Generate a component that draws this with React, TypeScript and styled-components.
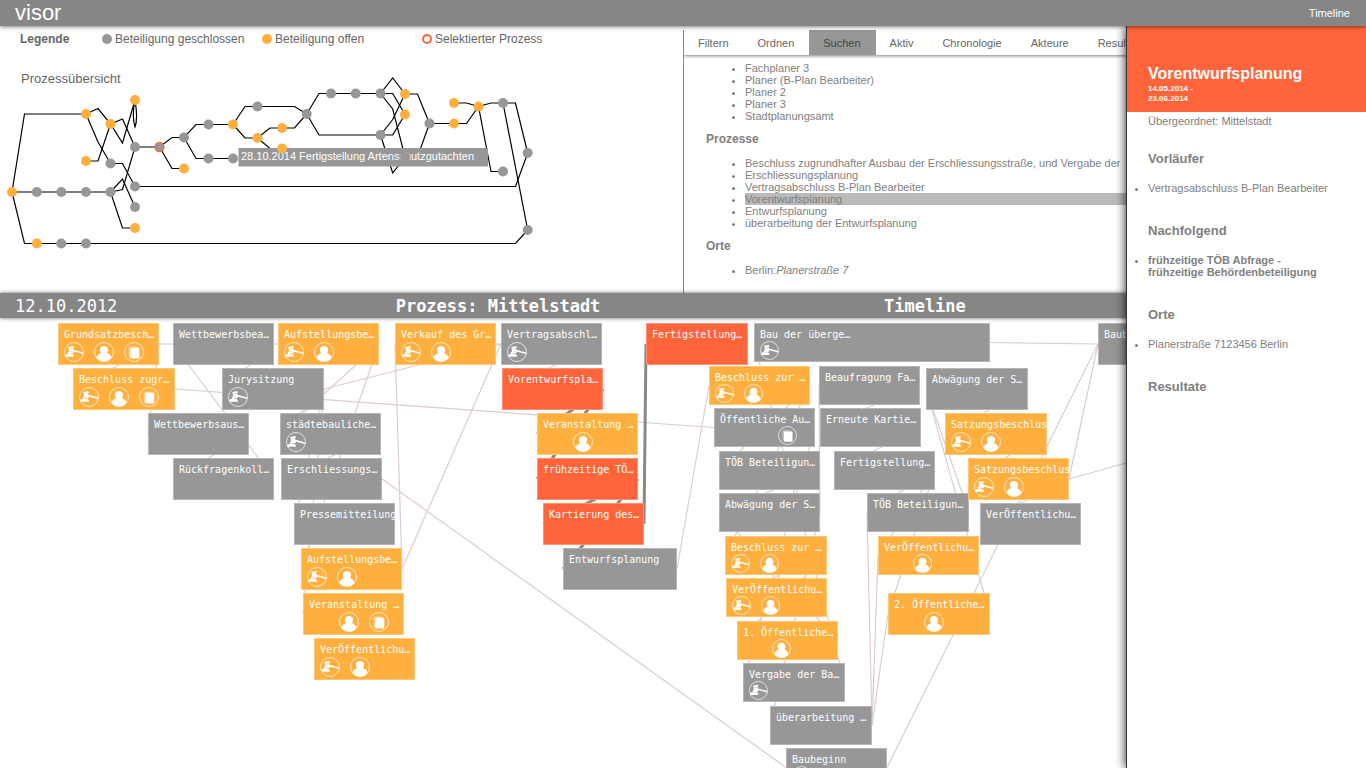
import React from "react";
import styled, { createGlobalStyle, css } from "styled-components";

const color = {
  bar: "#868686",
  closed: "#979797",
  open: "#ffaf3e",
  selected: "#ff643a",
  text: "#666666",
  soft: "#808080",
};

const sans = '"Liberation Sans", Arial, sans-serif';
const mono = '"DejaVu Sans Mono", monospace';

const GlobalStyle = createGlobalStyle`
  * { box-sizing: border-box; }
  body { margin: 0; background: #fff; font: 11px/12px ${sans}; color: ${color.soft}; }
  h1, h2, h3, p, ul { margin: 0; padding: 0; }
  button { font: inherit; color: inherit; border: 0; padding: 0; margin: 0; background: none; cursor: pointer; }
  a { color: inherit; text-decoration: none; }
`;

const Page = styled.div`
  display: flex;
  flex-direction: column;
  height: 100vh;
  overflow: hidden;
`;

const TopBar = styled.header`
  position: relative;
  z-index: 3;
  flex: none;
  display: flex;
  align-items: center;
  justify-content: space-between;
  height: 26px;
  padding: 0 16px 0 15px;
  background: ${color.bar};
  color: #fff;
  box-shadow: 0 1px 4px rgba(0, 0, 0, 0.5);
`;

const Brand = styled.h1`
  font-size: 22px;
  line-height: 26px;
  font-weight: 400;
`;

const Body = styled.main`
  position: relative;
  flex: 1;
  min-height: 0;
  display: flex;
  flex-direction: column;
`;

const Upper = styled.div`
  flex: none;
  display: grid;
  grid-template-columns: 1fr 1fr;
  height: 267px;
`;

const Overview = styled.section`
  display: flex;
  flex-direction: column;
  min-width: 0;
`;

const Legend = styled.div`
  display: flex;
  align-items: center;
  height: 25px;
  padding-left: 20px;
  font-size: 12px;
  line-height: 14px;
  color: ${color.text};
`;

const LegendTitle = styled.strong`
  width: 82px;
`;

const LegendItem = styled.span<{ $width: number }>`
  display: flex;
  align-items: center;
  gap: 3px;
  width: ${(p) => p.$width}px;
  white-space: nowrap;
`;

const Dot = styled.i<{ $kind: "closed" | "open" | "ring" }>`
  flex: none;
  width: 10px;
  height: 10px;
  border-radius: 50%;
  ${(p) =>
    p.$kind === "ring"
      ? css`border: 2px solid ${color.selected};`
      : css`background: ${color[p.$kind]};`}
`;

const OverviewTitle = styled.h2`
  margin: 20px 0 0 21px;
  font-size: 13px;
  line-height: 16px;
  font-weight: 400;
  color: ${color.text};
`;

const Graph = styled.svg`
  display: block;
  width: 560px;
  height: 190px;
  margin-top: -17px;
`;

const Browser = styled.section`
  margin-top: 4px;
  border-left: 1px solid ${color.bar};
  min-width: 0;
  overflow: hidden;
`;

const Tabs = styled.nav`
  display: flex;
  height: 25px;
  box-shadow: 0 1px 3px rgba(0, 0, 0, 0.5);
`;

const Tab = styled.button<{ $active?: boolean }>`
  padding: 0 15px 0 14px;
  white-space: nowrap;
  color: ${(p) => (p.$active ? "#444" : color.text)};
  background: ${(p) => (p.$active ? color.closed : "transparent")};
`;

const Results = styled.div`
  padding: 7px 0 0 22px;
`;

const GroupTitle = styled.h3`
  margin: 11px 0;
  font-size: 12px;
  line-height: 13px;
`;

const ResultList = styled.ul`
  padding-left: 39px;
`;

const Result = styled.li<{ $active?: boolean }>`
  white-space: nowrap;
  background: ${(p) => (p.$active ? "#bababa" : "transparent")};
`;

const TimelineBar = styled.div`
  position: relative;
  z-index: 1;
  flex: none;
  display: grid;
  grid-template-columns: 10fr 15fr 15fr 8fr;
  height: 25px;
  background: ${color.bar};
  color: #fff;
  font: 17px/26px ${mono};
  text-align: center;
  box-shadow: 0 0 4px rgba(0, 0, 0, 0.6);
`;

const BarDate = styled.time`
  padding-left: 15px;
  text-align: left;
`;

const BarTitle = styled.h2`
  font: bold 17px/26px ${mono};
`;

const Canvas = styled.section`
  position: relative;
  flex: 1;
  min-height: 0;
  overflow: hidden;
`;

const Edges = styled.svg`
  display: block;
  width: 100%;
  height: 100%;
`;

const Step = styled.button<{ $x: number; $y: number; $w: number; $h: number; $fill: string }>`
  position: absolute;
  left: ${(p) => p.$x}px;
  top: ${(p) => p.$y}px;
  width: ${(p) => p.$w}px;
  height: ${(p) => p.$h}px;
  display: flex;
  flex-direction: column;
  align-items: flex-start;
  gap: ${(p) => (p.$h < 40 ? 0 : 1)}px;
  padding: 4px 0 0 5px;
  border: 1px solid rgba(255, 255, 255, 0.3);
  background: ${(p) => p.$fill};
  color: #fff;
  font: 10px/13px ${mono};
  text-align: left;
  white-space: nowrap;
`;

const Icons = styled.span<{ $compact: boolean }>`
  display: grid;
  grid-template-columns: repeat(3, ${(p) => (p.$compact ? 29 : 30)}px);

  svg {
    display: block;
    width: ${(p) => (p.$compact ? 19 : 20)}px;
    height: ${(p) => (p.$compact ? 19 : 20)}px;
  }
`;

const Sidebar = styled.aside`
  position: absolute;
  z-index: 2;
  top: 0;
  right: 0;
  bottom: 0;
  width: 240px;
  border-left: 1px solid #333;
  background: #fff;
  box-shadow: 0 0 10px rgba(0, 0, 0, 0.9);
`;

const SideHead = styled.div`
  height: 86px;
  padding: 38px 20px 0 21px;
  background: ${color.selected};
  color: #fff;
`;

const SideTitle = styled.h2`
  font-size: 16px;
  line-height: 20px;
`;

const SideDates = styled.p`
  font-size: 8px;
  line-height: 10px;
  font-weight: 700;
`;

const SideBody = styled.div`
  padding: 3px 32px 0 21px;
`;

const SideHeading = styled.h3`
  margin: 29px 0 16px;
  font-size: 13px;
  line-height: 15px;

  p + & {
    margin-top: 24px;
  }
`;

const SideItem = styled.li<{ $strong?: boolean }>`
  font-weight: ${(p) => (p.$strong ? 700 : 400)};
`;

/* ---------- process overview ---------- */

const overviewLines = [
  "12,192 24.5,114 86,114 98,108.5 110.5,124 122.5,119 135,147",
  "86,114 98,142 110.5,163.5 122.5,163.5 135,186.5 515.5,186.5 527.7,153",
  "86,161 98,161 110.5,124 122.5,143 135,100",
  "12,192 110.5,192 122.5,189.5 135,147 159.5,147 172,137.5 184,137.5 196,124.5 233,124.5 245,106.5 294.5,106.5 306.7,114",
  "110.5,192 122.5,179 135,207",
  "110.5,192 122.5,228 135,228",
  "12,192 24.5,243.5 515.5,243.5 527.7,230",
  "159.5,147 172,168.5 184,168.5",
  "184,137.5 196,158.5 233,158.5",
  "233,124.5 245,138 257.5,138 270,128 294.5,128 306.7,114",
  "257.5,138 270,148.5 282,148.5",
  "306.7,114 319,93.5 380.5,93.5 392.7,78 405,94 417.5,94 429.5,123.5",
  "306.7,114 319,135 380.5,135 392.7,119.5 405,94",
  "380.5,93.5 392.7,93.5 405,114.5",
  "380.5,93.5 392.7,109 405,157 417.5,157 429.5,123.5",
  "380.5,135 392.7,135 405,114.5",
  "380.5,135 392.7,173 405,157",
  "429.5,123.5 466.5,123.5 478.5,106.5 491,103 515.5,103 527.7,153",
  "454,103 466.5,103 478.5,106.5 491,171.5 503,171.5",
  "503,103 527.7,230",
];

const closedDots: [number, number][] = [
  [36.8, 192], [61.3, 192], [86, 192], [110.5, 192], [110.5, 163.5], [135, 147],
  [135, 186.5], [135, 207], [61.3, 243.5], [86, 243.5], [184, 137.5], [208.5, 124.5],
  [208.5, 158.5], [233, 158.5], [257.5, 106.5], [306.7, 114], [331, 93.5], [355.7, 93.5],
  [380.5, 93.5], [380.5, 135], [405, 157], [429.5, 123.5], [503, 103], [503, 171.5],
  [527.7, 153], [527.7, 230],
];

const openDots: [number, number][] = [
  [12, 192], [86, 114], [110.5, 124], [135, 100], [86, 161], [135, 228], [36.8, 243.5],
  [184, 168.5], [233, 124.5], [257.5, 138], [282, 128], [282, 148.5], [405, 94],
  [405, 114.5], [454, 103], [454, 123.5], [478.5, 106.5],
];

function OverviewGraph() {
  return (
    <Graph viewBox="0 70 560 190" role="img" aria-label="Prozessübersicht">
      <g fill="none" stroke="#000" strokeWidth="1.2">
        {overviewLines.map((points) => (
          <polyline key={points} points={points} />
        ))}
        <path d="M135 100C132.500 112 133.500 122 135 127C137 122 137 112 135 100" />
      </g>
      <rect x="238.500" y="148" width="249.500" height="18.500" fill={color.closed} />
      <text x="241" y="160" fill="#fff" fontSize="11">
        28.10.2014 Fertigstellung Artenschutzgutachten
      </text>
      <g fill={color.closed}>
        {closedDots.map(([x, y]) => (
          <circle key={`${x}-${y}`} cx={x} cy={y} r="5" />
        ))}
      </g>
      <g fill={color.open}>
        {openDots.map(([x, y]) => (
          <circle key={`${x}-${y}`} cx={x} cy={y} r="5" />
        ))}
      </g>
      <circle cx="159.500" cy="147" r="4.500" fill={color.closed} stroke={color.selected} strokeWidth="1.300" />
    </Graph>
  );
}

/* ---------- timeline ---------- */

type Kind = "closed" | "open" | "selected";
type IconName = "decision" | "people" | "document";

interface StepData {
  id: string;
  label: string;
  x: number;
  y: number;
  kind: Kind;
  icons?: IconName[];
  w?: number;
  h?: number;
}

const STEP_WIDTH = 101;
const STEP_HEIGHT = 42;
const COMPACT = 39;

const D: IconName = "decision";
const P: IconName = "people";
const F: IconName = "document";

const steps: StepData[] = [
  { id: "g", label: "Grundsatzbesch…", x: 58, y: 5, kind: "open", icons: [D, P, F] },
  { id: "b", label: "Beschluss zugr…", x: 73, y: 50, w: 102, kind: "open", icons: [D, P, F] },
  { id: "wb", label: "Wettbewerbsbea…", x: 173, y: 5, kind: "closed" },
  { id: "ju", label: "Jurysitzung", x: 222, y: 50, w: 102, kind: "closed", icons: [D] },
  { id: "wa", label: "Wettbewerbsaus…", x: 148, y: 95, kind: "closed" },
  { id: "rk", label: "Rückfragenkoll…", x: 173, y: 140, kind: "closed" },
  { id: "au", label: "Aufstellungsbe…", x: 278, y: 5, kind: "open", icons: [D, P] },
  { id: "st", label: "städtebauliche…", x: 280, y: 95, kind: "closed", icons: [D] },
  { id: "er", label: "Erschliessungs…", x: 281, y: 140, kind: "closed" },
  { id: "pm", label: "Pressemitteilung", x: 294, y: 185, kind: "closed" },
  { id: "ab", label: "Aufstellungsbe…", x: 301, y: 230, kind: "open", icons: [D, P] },
  { id: "vs", label: "Veranstaltung …", x: 303, y: 275, kind: "open", icons: [P, F] },
  { id: "vo", label: "VerÖffentlichu…", x: 314, y: 320, kind: "open", icons: [D, P] },
  { id: "vk", label: "Verkauf des Gr…", x: 395, y: 5, kind: "open", icons: [D, P] },
  { id: "va", label: "Vertragsabschl…", x: 501, y: 5, kind: "closed", icons: [D] },
  { id: "vp", label: "Vorentwurfspla…", x: 502, y: 50, kind: "selected" },
  { id: "ve", label: "Veranstaltung …", x: 537, y: 95, kind: "open", icons: [P] },
  { id: "fr", label: "frühzeitige TÖ…", x: 537, y: 140, kind: "selected" },
  { id: "ka", label: "Kartierung des…", x: 543, y: 185, kind: "selected" },
  { id: "en", label: "Entwurfsplanung", x: 563, y: 230, w: 114, kind: "closed" },
  { id: "ff", label: "Fertigstellung…", x: 646, y: 5, w: 102, kind: "selected" },
  { id: "bu", label: "Bau der überge…", x: 754, y: 5, w: 236, h: COMPACT, kind: "closed", icons: [D] },
  { id: "bz", label: "Beschluss zur …", x: 709, y: 48, h: COMPACT, kind: "open", icons: [D, P] },
  { id: "oa", label: "Öffentliche Au…", x: 714, y: 90, h: COMPACT, kind: "closed", icons: [F] },
  { id: "tb", label: "TÖB Beteiligun…", x: 719, y: 133, h: COMPACT, kind: "closed" },
  { id: "aw", label: "Abwägung der S…", x: 719, y: 175, h: COMPACT, kind: "closed" },
  { id: "b2", label: "Beschluss zur …", x: 725, y: 218, w: 102, h: COMPACT, kind: "open", icons: [D, P] },
  { id: "vf", label: "VerÖffentlichu…", x: 726, y: 260, h: COMPACT, kind: "open", icons: [D, P] },
  { id: "o1", label: "1. Öffentliche…", x: 737, y: 303, h: COMPACT, kind: "open", icons: [P] },
  { id: "vb", label: "Vergabe der Ba…", x: 743, y: 345, w: 102, h: COMPACT, kind: "closed", icons: [D] },
  { id: "ue", label: "überarbeitung …", x: 770, y: 388, w: 102, h: COMPACT, kind: "closed" },
  { id: "bb", label: "Baubeginn", x: 786, y: 430, h: COMPACT, kind: "closed", icons: [D] },
  { id: "bf", label: "Beaufragung Fa…", x: 819, y: 48, h: COMPACT, kind: "closed" },
  { id: "ek", label: "Erneute Kartie…", x: 820, y: 90, h: COMPACT, kind: "closed" },
  { id: "fe", label: "Fertigstellung…", x: 834, y: 133, h: COMPACT, kind: "closed" },
  { id: "t2", label: "TÖB Beteiligun…", x: 867, y: 175, w: 102, h: COMPACT, kind: "closed" },
  { id: "as", label: "Abwägung der S…", x: 926, y: 50, w: 102, kind: "closed" },
  { id: "s1", label: "Satzungsbeschlus", x: 945, y: 95, w: 102, kind: "open", icons: [D, P] },
  { id: "s2", label: "Satzungsbeschlus", x: 968, y: 140, kind: "open", icons: [D, P] },
  { id: "v3", label: "VerÖffentlichu…", x: 980, y: 185, kind: "closed" },
  { id: "v2", label: "VerÖffentlichu…", x: 878, y: 218, h: COMPACT, kind: "open", icons: [P] },
  { id: "o2", label: "2. Öffentliche…", x: 888, y: 275, w: 102, kind: "open", icons: [P] },
  { id: "bx", label: "Baubeginn", x: 1098, y: 5, kind: "closed" },
];

const links = (
  "g-b g-wa g-wb wb-au wb-ju b-oa wa-rk rk-wb au-st au-ab st-er ju-va ju-pm ju-vs ju-st " +
  "ab-vk ab-va vk-va er-bb va-vp en-bz bu-bx vb-bu bz-tb bz-b2 oa-vb tb-aw o1-aw b2-vf b2-o1 " +
  "aw-ue bf-ek aw-bf ek-fe fe-t2 fe-v2 fe-o2 ue-t2 ue-v2 ue-o2 o2-as t2-as as-s1 s1-s2 bb-bx s2-bx s2-v3"
).split(" ");

const activeLinks = "vp-ve vp-fr fr-ka fr-en ka-ff".split(" ");

const byId = new Map(steps.map((s) => [s.id, s]));

/* A link leaves the right side of its first step and ends at the left side of the second. */
function Link({ pair }: { pair: string }) {
  const [from, to] = pair.split("-").map((id) => byId.get(id)!);
  return (
    <line
      x1={from.x + (from.w ?? STEP_WIDTH)}
      y1={from.y + (from.h ?? STEP_HEIGHT) / 2}
      x2={to.x}
      y2={to.y + (to.h ?? STEP_HEIGHT) / 2}
    />
  );
}

function StepIcon({ name }: { name: IconName }) {
  const column = { decision: 1, people: 2, document: 3 }[name];
  return (
    <svg viewBox="0 0 20 20" style={{ gridColumn: column }} aria-hidden="true">
      <circle cx="10" cy="10" r="9.500" fill="none" stroke="#fff" strokeOpacity="0.8" strokeWidth="0.900" />
      {name === "decision" && (
        <g fill="#fff">
          <path d="M4.300 5L9.300 3.900L9.900 5.900L4.800 7.100Z" />
          <path d="M4.700 7.300L9 6.300L9.700 9L5.100 9.900Z" />
          <path d="M3.700 10L9.500 9L9.800 11L4.200 12Z" />
          <path d="M8.500 7.600L19.200 10.600L18.900 12L8.500 9.200Z" />
          <path d="M2.300 11.900H9V13H9.900V14.800H1.200V13H2.300Z" />
        </g>
      )}
      {name === "people" && (
        <path
          fill="#fff"
          d="M10 4C12.700 4 14.300 5.900 14.100 8.100C14 9.500 13.600 10.500 13 11C15.600 12 17.200 13.800 17.500 16C15.600 18.400 13 19.500 10 19.500C7 19.500 4.400 18.400 2.500 16C2.800 13.800 4.400 12 7 11C6.400 10.500 6 9.500 5.900 8.100C5.700 5.900 7.300 4 10 4Z"
        />
      )}
      {name === "document" && (
        <g fill="#fff">
          <rect x="4.600" y="4.600" width="9" height="11" rx="0.800" fillOpacity="0.400" />
          <rect x="6.300" y="5.800" width="9" height="10.700" rx="0.800" />
        </g>
      )}
    </svg>
  );
}

function Timeline() {
  return (
    <Canvas aria-label="Timeline">
      <Edges aria-hidden="true">
        <g stroke="#dccdd1" strokeWidth="1.200">
          {links.map((pair) => (
            <Link key={pair} pair={pair} />
          ))}
        </g>
        <line x1="1126" y1="145" x2="1069" y2="161" stroke="#dccdd1" strokeWidth="1.200" />
        <g stroke="#888" strokeWidth="3">
          {activeLinks.map((pair) => (
            <Link key={pair} pair={pair} />
          ))}
        </g>
      </Edges>
      {steps.map(({ id, label, x, y, w = STEP_WIDTH, h = STEP_HEIGHT, kind, icons }) => (
        <Step key={id} type="button" $x={x} $y={y} $w={w} $h={h} $fill={color[kind]}>
          {label}
          {icons && (
            <Icons $compact={h === COMPACT}>
              {icons.map((name) => (
                <StepIcon key={name} name={name} />
              ))}
            </Icons>
          )}
        </Step>
      ))}
    </Canvas>
  );
}

/* ---------- page ---------- */

const tabs = ["Filtern", "Ordnen", "Suchen", "Aktiv", "Chronologie", "Akteure", "Resultate"];
const actors = ["Fachplaner 3", "Planer (B-Plan Bearbeiter)", "Planer 2", "Planer 3", "Stadtplanungsamt"];
const processes = [
  "Beschluss zugrundhafter Ausbau der Erschliessungsstraße, und Vergabe der",
  "Erschliessungsplanung",
  "Vertragsabschluss B-Plan Bearbeiter",
  "Vorentwurfsplanung",
  "Entwurfsplanung",
  "überarbeitung der Entwurfsplanung",
];

export default function App() {
  return (
    <Page>
      <GlobalStyle />
      <TopBar>
        <Brand>visor</Brand>
        <a href="#timeline">Timeline</a>
      </TopBar>
      <Body>
        <Upper>
          <Overview>
            <Legend>
              <LegendTitle>Legende</LegendTitle>
              <LegendItem $width={160}>
                <Dot $kind="closed" />
                Beteiligung geschlossen
              </LegendItem>
              <LegendItem $width={160}>
                <Dot $kind="open" />
                Beteiligung offen
              </LegendItem>
              <LegendItem $width={160}>
                <Dot $kind="ring" />
                Selektierter Prozess
              </LegendItem>
            </Legend>
            <OverviewTitle>Prozessübersicht</OverviewTitle>
            <OverviewGraph />
          </Overview>
          <Browser>
            <Tabs>
              {tabs.map((name) => (
                <Tab key={name} type="button" $active={name === "Suchen"}>
                  {name}
                </Tab>
              ))}
            </Tabs>
            <Results>
              <ResultList>
                {actors.map((name) => (
                  <Result key={name}>{name}</Result>
                ))}
              </ResultList>
              <GroupTitle>Prozesse</GroupTitle>
              <ResultList>
                {processes.map((name) => (
                  <Result key={name} $active={name === "Vorentwurfsplanung"}>
                    {name}
                  </Result>
                ))}
              </ResultList>
              <GroupTitle>Orte</GroupTitle>
              <ResultList>
                <Result>
                  Berlin:<em>Planerstraße 7</em>
                </Result>
              </ResultList>
            </Results>
          </Browser>
        </Upper>
        <TimelineBar id="timeline">
          <BarDate dateTime="2012-10-12">12.10.2012</BarDate>
          <BarTitle>Prozess: Mittelstadt</BarTitle>
          <BarTitle>Timeline</BarTitle>
        </TimelineBar>
        <Timeline />
        <Sidebar>
          <SideHead>
            <SideTitle>Vorentwurfsplanung</SideTitle>
            <SideDates>
              14.05.2014 -<br />
              23.06.2014
            </SideDates>
          </SideHead>
          <SideBody>
            <p>Übergeordnet: Mittelstadt</p>
            <SideHeading>Vorläufer</SideHeading>
            <ul>
              <SideItem>Vertragsabschluss B-Plan Bearbeiter</SideItem>
            </ul>
            <SideHeading>Nachfolgend</SideHeading>
            <ul>
              <SideItem $strong>frühzeitige TÖB Abfrage - frühzeitige Behördenbeteiligung</SideItem>
            </ul>
            <SideHeading>Orte</SideHeading>
            <ul>
              <SideItem>Planerstraße 7123456 Berlin</SideItem>
            </ul>
            <SideHeading>Resultate</SideHeading>
          </SideBody>
        </Sidebar>
      </Body>
    </Page>
  );
}
